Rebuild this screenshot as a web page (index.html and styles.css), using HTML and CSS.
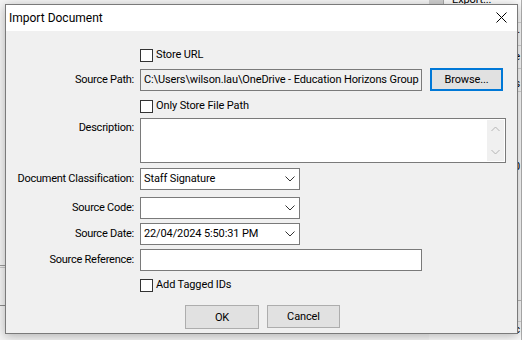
FILE: index.html
```html
<!DOCTYPE html>
<html lang="en">
<head>
    <meta charset="UTF-8">
    <title>Import Document</title>
    <link rel="stylesheet" href="styles.css">
</head>
<body>
    <div class="backdrop">
        <div class="side-left">
            <div class="lrow lrow-a"></div>
            <div class="lrow lrow-b"></div>
        </div>
        <div class="spacer"></div>
        <div class="side-right">
            <div class="top-strip"><span class="grip"></span><span class="export">Export...</span></div>
            <div class="rrow r1">Table.</div>
            <div class="rrow r2">Date</div>
            <div class="rrow r3">Dates</div>
            <div class="rrow r4">5:50</div>
            <div class="rrow r5"></div>
            <div class="rrow r6">Doc</div>
        </div>
    </div>

    <div class="dialog">
        <div class="titlebar">
            <span class="title">Import Document</span>
            <svg class="close" width="11" height="11" viewBox="0 0 11 11">
                <path d="M0.5 0.5 L10.5 10.5 M10.5 0.5 L0.5 10.5" stroke="#000" stroke-width="1" fill="none"/>
            </svg>
        </div>
        <div class="content">
            <div class="row row-url">
                <div class="label"></div>
                <label class="check"><span class="box"></span>Store URL</label>
            </div>
            <div class="row row-path">
                <div class="label">Source Path:</div>
                <div class="input readonly wide">C:\Users\wilson.lau\OneDrive - Education Horizons Group</div>
                <button class="btn browse">Browse...</button>
            </div>
            <div class="row row-only">
                <div class="label"></div>
                <label class="check"><span class="box"></span>Only Store File Path</label>
            </div>
            <div class="row row-desc">
                <div class="label top">Description:</div>
                <div class="textarea">
                    <div class="scroll">
                        <svg width="9" height="6" viewBox="0 0 9 6"><path d="M0.5 5 L4.5 1 L8.5 5" stroke="#b4b4b4" fill="none"/></svg>
                        <svg width="9" height="6" viewBox="0 0 9 6"><path d="M0.5 1 L4.5 5 L8.5 1" stroke="#b4b4b4" fill="none"/></svg>
                    </div>
                </div>
            </div>
            <div class="row row-class">
                <div class="label">Document Classification:</div>
                <div class="select">Staff Signature<svg class="chev" width="10" height="6" viewBox="0 0 10 6"><path d="M0.5 0.5 L5 5 L9.5 0.5" stroke="#333" fill="none"/></svg></div>
            </div>
            <div class="row row-code">
                <div class="label">Source Code:</div>
                <div class="select"><svg class="chev" width="10" height="6" viewBox="0 0 10 6"><path d="M0.5 0.5 L5 5 L9.5 0.5" stroke="#333" fill="none"/></svg></div>
            </div>
            <div class="row row-date">
                <div class="label">Source Date:</div>
                <div class="select">22/04/2024 5:50:31 PM<svg class="chev" width="10" height="6" viewBox="0 0 10 6"><path d="M0.5 0.5 L5 5 L9.5 0.5" stroke="#333" fill="none"/></svg></div>
            </div>
            <div class="row row-ref">
                <div class="label">Source Reference:</div>
                <div class="input wide"></div>
            </div>
            <div class="row row-tag">
                <div class="label"></div>
                <label class="check"><span class="box"></span>Add Tagged IDs</label>
            </div>
            <div class="buttons">
                <button class="btn ok">OK</button>
                <button class="btn cancel">Cancel</button>
            </div>
        </div>
    </div>
</body>
</html>
```

FILE: styles.css
```css
body, html {
    margin: 0;
    padding: 0;
    height: 100%;
    overflow: hidden;
    font-family: Roboto, "Noto Sans", sans-serif;
    font-size: 11px;
    letter-spacing: -0.12px;
    line-height: 14px;
    color: #000;
}
.backdrop {
    display: flex;
    height: 340px;
    background-color: #f4f4f4;
}
.side-left {
    width: 8px;
    padding-top: 265px;
}
.lrow {
    border-top: 1px solid #9a9a9a;
}
.lrow-a {
    height: 1px;
    border-bottom: 1px solid #c8c8c8;
}
.lrow-b {
    margin-top: 37px;
    border-color: #8c8c8c;
}
.spacer {
    flex: 1;
}
.side-right {
    width: 92px;
    background-color: #fafafa;
    border-right: 1px solid #b0b0b0;
    text-align: right;
}
.top-strip {
    display: flex;
    height: 22px;
    border-bottom: 1px solid #d4d4d4;
    line-height: 8px;
}
.grip {
    width: 14px;
    background-color: #cfcfcf;
    border-right: 1px solid #a8a8a8;
}
.export {
    margin-left: 8px;
    margin-top: -4px;
    white-space: nowrap;
}
.rrow {
    border-bottom: 1px solid #d4d4d4;
    padding-right: 1px;
    white-space: nowrap;
    overflow: hidden;
}
.r1 { height: 22px; line-height: 14px; }
.r2 { height: 22px; line-height: 22px; }
.r3 { height: 22px; line-height: 30px; }
.r4 { height: 207px; line-height: 150px; border-color: #fafafa; }
.r5 { height: 20px; border-top: 1px solid #b8b8b8; }
.r6 { height: 18px; line-height: 16px; }

.dialog {
    position: absolute;
    left: 5px;
    top: 4px;
    width: 513px;
    height: 330px;
    box-sizing: border-box;
    border: 1px solid #7a7a7a;
    background-color: #f0f0f0;
    box-shadow: 0 2px 10px rgba(0, 0, 0, 0.28);
    display: flex;
    flex-direction: column;
}
.titlebar {
    height: 26px;
    background-color: #fff;
    display: flex;
    align-items: center;
    justify-content: space-between;
    padding: 0 10px 0 3px;
    font-size: 12px;
    letter-spacing: 0;
}
.title {
    margin-top: -1px;
}
.close {
    margin-top: -1px;
}
.content {
    padding-top: 17px;
}
.row {
    display: flex;
    align-items: center;
}
.label {
    width: 128px;
    margin-right: 6px;
    text-align: right;
    white-space: nowrap;
    letter-spacing: -0.25px;
}
.label.top {
    align-self: flex-start;
    padding-top: 3px;
}
.check {
    display: flex;
    align-items: center;
    height: 14px;
    white-space: nowrap;
}
.box {
    width: 11px;
    height: 11px;
    border: 1px solid #333;
    background-color: #fff;
    margin-right: 3px;
}
.input, .select, .textarea {
    box-sizing: border-box;
    border: 1px solid #7a7a7a;
    background-color: #fff;
    height: 22px;
    line-height: 20px;
    padding-left: 3px;
    white-space: nowrap;
    overflow: hidden;
}
.input.wide {
    width: 282px;
}
.input.readonly {
    background-color: #f0f0f0;
}
.textarea {
    width: 366px;
    height: 45px;
    position: relative;
}
.scroll {
    position: absolute;
    right: 1px;
    top: 1px;
    bottom: 1px;
    width: 17px;
    background-color: #f0f0f0;
    display: flex;
    flex-direction: column;
    align-items: center;
    justify-content: space-between;
    padding: 6px 0;
    box-sizing: border-box;
}
.select {
    width: 160px;
    display: flex;
    align-items: center;
    padding-right: 4px;
}
.chev {
    margin-left: auto;
}
.btn {
    font-family: inherit;
    font-size: 11px;
    letter-spacing: -0.12px;
    color: #000;
    background-color: #e1e1e1;
    border: 1px solid #adadad;
    padding: 0;
    box-sizing: border-box;
}
.browse {
    margin-left: 8px;
    width: 73px;
    height: 23px;
    border: 2px solid #0078d7;
}
.row-url { margin-top: 0; }
.row-path { margin-top: 6px; }
.row-only { margin-top: 8px; }
.row-desc { margin-top: 5px; }
.row-class { margin-top: 5px; }
.row-code { margin-top: 7px; }
.row-date { margin-top: 4px; }
.row-ref { margin-top: 4px; }
.row-tag { margin-top: 7px; }
.buttons {
    display: flex;
    align-items: flex-start;
    gap: 8px;
    padding-left: 179px;
    margin-top: 13px;
}
.ok {
    width: 74px;
    height: 24px;
}
.cancel {
    width: 73px;
    height: 23px;
}
```
